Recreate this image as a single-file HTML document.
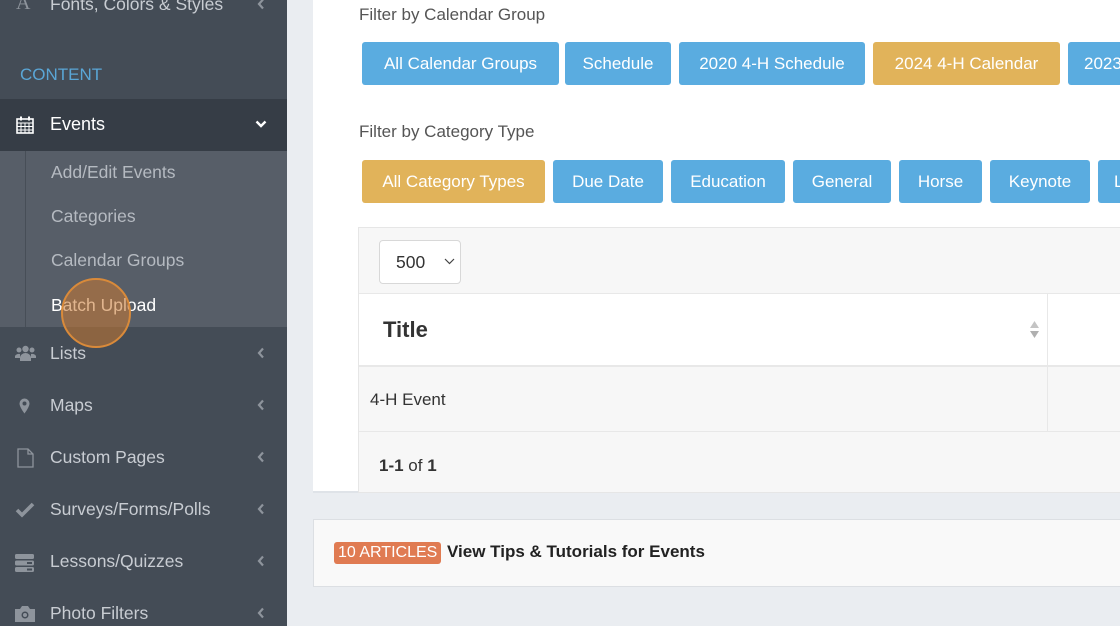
<!DOCTYPE html>
<html><head><meta charset="utf-8"><style>
*{margin:0;padding:0;box-sizing:border-box}
body{width:1120px;height:626px;overflow:hidden;background:#eaedf1;font-family:"Liberation Sans",sans-serif;position:relative}
.sb{position:absolute;left:0;top:0;width:287px;height:626px;background:#444c56}
.t{position:absolute;white-space:nowrap}
.item{position:absolute;left:0;width:287px;color:#c8ccd2;font-size:17.5px}
.item .lbl{position:absolute;left:50px}
.chev{position:absolute;left:257px}
.btn{position:absolute;height:43px;border-radius:3px;color:#fff;font-size:17px;line-height:43px;text-align:center;background:#5aace0;white-space:nowrap;overflow:hidden}
.gold{background:#e1b35a}
</style></head><body>
<div class="sb">
  <div class="t" style="left:16px;top:-8px;color:#8e949c;font-family:'Liberation Serif',serif;font-size:20px">A</div>
  <div class="t" style="left:50px;top:-6px;color:#c8ccd2;font-size:17.5px">Fonts, Colors &amp; Styles</div>
  <svg class="chev" style="top:-2px" width="8" height="12" viewBox="0 0 8 12"><path d="M6 1.5L2 6l4 4.5" stroke="#8e949c" stroke-width="2.2" fill="none"/></svg>
  <div class="t" style="left:20px;top:65px;color:#5aa6d6;font-size:17px">CONTENT</div>
  <div style="position:absolute;left:0;top:99px;width:287px;height:52px;background:#363d46"></div>
  <svg style="position:absolute;left:16px;top:116px" width="18" height="18" viewBox="0 0 18 18"><rect x="1" y="3" width="16" height="14" fill="none" stroke="#fff" stroke-width="1.6"/><path d="M1 7h16M5 7v10M9 7v10M13 7v10M1 10.5h16M1 14h16" stroke="#fff" stroke-width="1"/><rect x="4" y="0.5" width="2" height="4" fill="#fff"/><rect x="12" y="0.5" width="2" height="4" fill="#fff"/></svg>
  <div class="t" style="left:50px;top:114px;color:#fff;font-size:18px">Events</div>
  <svg style="position:absolute;left:255px;top:119px" width="12" height="10" viewBox="0 0 12 10"><path d="M1.5 2.5L6 7l4.5-4.5" stroke="#fff" stroke-width="2.4" fill="none"/></svg>
  <div style="position:absolute;left:0;top:151px;width:287px;height:176px;background:#575e68"></div>
  <div style="position:absolute;left:25px;top:151px;width:1px;height:176px;background:#474e57"></div>
  <div class="t" style="left:51px;top:162px;color:#b5bac1;font-size:17.5px">Add/Edit Events</div>
  <div class="t" style="left:51px;top:206px;color:#b5bac1;font-size:17.5px">Categories</div>
  <div class="t" style="left:51px;top:250px;color:#b5bac1;font-size:17.5px">Calendar Groups</div>
  <div class="t" style="left:51px;top:295px;color:#fff;font-size:17.5px">Batch Upload</div>
  <div style="position:absolute;left:61px;top:278px;width:70px;height:70px;border-radius:50%;background:rgba(200,120,50,0.55);border:2px solid #d98a3a"></div>
  <div class="item" style="top:343px"><span class="lbl">Lists</span></div>
  <svg class="chev" style="top:347px" width="8" height="12" viewBox="0 0 8 12"><path d="M6 1.5L2 6l4 4.5" stroke="#8e949c" stroke-width="2.2" fill="none"/></svg>
  <svg style="position:absolute;left:15px;top:345px" width="21" height="17" viewBox="0 0 21 17"><circle cx="10.5" cy="4" r="3.2" fill="#8e949c"/><circle cx="4" cy="5" r="2.5" fill="#8e949c"/><circle cx="17" cy="5" r="2.5" fill="#8e949c"/><path d="M5 16v-3a5.5 5 0 0 1 11 0v3z M0 13v-2a4 3 0 0 1 5-2v4z M21 13v-2a4 3 0 0 0-5-2v4z" fill="#8e949c"/></svg>
  <div class="item" style="top:395px"><span class="lbl">Maps</span></div>
  <svg class="chev" style="top:399px" width="8" height="12" viewBox="0 0 8 12"><path d="M6 1.5L2 6l4 4.5" stroke="#8e949c" stroke-width="2.2" fill="none"/></svg>
  <svg style="position:absolute;left:19px;top:398px" width="11" height="16" viewBox="0 0 11 16"><path d="M5.5 0.5a5 5 0 0 1 5 5c0 3.5-5 10-5 10s-5-6.5-5-10a5 5 0 0 1 5-5z" fill="#8e949c"/><circle cx="5.5" cy="5.5" r="2" fill="#444c56"/></svg>
  <div class="item" style="top:447px"><span class="lbl">Custom Pages</span></div>
  <svg class="chev" style="top:451px" width="8" height="12" viewBox="0 0 8 12"><path d="M6 1.5L2 6l4 4.5" stroke="#8e949c" stroke-width="2.2" fill="none"/></svg>
  <svg style="position:absolute;left:17px;top:448px" width="17" height="20" viewBox="0 0 17 20"><path d="M1 1h10l5 5v13H1z M11 1v5h5" fill="none" stroke="#8e949c" stroke-width="1.3"/></svg>
  <div class="item" style="top:499px"><span class="lbl">Surveys/Forms/Polls</span></div>
  <svg class="chev" style="top:503px" width="8" height="12" viewBox="0 0 8 12"><path d="M6 1.5L2 6l4 4.5" stroke="#8e949c" stroke-width="2.2" fill="none"/></svg>
  <svg style="position:absolute;left:15px;top:502px" width="20" height="16" viewBox="0 0 20 16"><path d="M2 8l5 5L18 2" stroke="#8e949c" stroke-width="3.6" fill="none"/></svg>
  <div class="item" style="top:551px"><span class="lbl">Lessons/Quizzes</span></div>
  <svg class="chev" style="top:555px" width="8" height="12" viewBox="0 0 8 12"><path d="M6 1.5L2 6l4 4.5" stroke="#8e949c" stroke-width="2.2" fill="none"/></svg>
  <svg style="position:absolute;left:15px;top:554px" width="19" height="18" viewBox="0 0 19 18"><rect x="0" y="0" width="19" height="5" rx="1.5" fill="#8e949c"/><rect x="0" y="6.5" width="19" height="5" rx="1.5" fill="#8e949c"/><rect x="0" y="13" width="19" height="5" rx="1.5" fill="#8e949c"/><rect x="12" y="8" width="5" height="2" fill="#444c56"/><rect x="12" y="14.5" width="5" height="2" fill="#444c56"/></svg>
  <div class="item" style="top:603px"><span class="lbl">Photo Filters</span></div>
  <svg class="chev" style="top:607px" width="8" height="12" viewBox="0 0 8 12"><path d="M6 1.5L2 6l4 4.5" stroke="#8e949c" stroke-width="2.2" fill="none"/></svg>
  <svg style="position:absolute;left:15px;top:605px" width="20" height="17" viewBox="0 0 20 17"><path d="M0 4h5l2-3h6l2 3h5v13H0z" fill="#8e949c"/><circle cx="10" cy="10" r="3.5" fill="#444c56"/><circle cx="10" cy="10" r="2" fill="#8e949c"/></svg>
</div>

<div style="position:absolute;left:313px;top:0;width:807px;height:493px;background:#fff;border-bottom:2px solid #dfe3e8"></div>
<div class="t" style="left:359px;top:5px;color:#555;font-size:17px">Filter by Calendar Group</div>
<div class="btn" style="left:362px;top:42px;width:197px">All Calendar Groups</div>
<div class="btn" style="left:565px;top:42px;width:106px">Schedule</div>
<div class="btn" style="left:679px;top:42px;width:186px">2020 4-H Schedule</div>
<div class="btn gold" style="left:873px;top:42px;width:187px">2024 4-H Calendar</div>
<div class="btn" style="left:1068px;top:42px;width:80px;text-align:left;padding-left:16px">2023</div>
<div class="t" style="left:359px;top:122px;color:#555;font-size:17px">Filter by Category Type</div>
<div class="btn gold" style="left:362px;top:160px;width:183px">All Category Types</div>
<div class="btn" style="left:553px;top:160px;width:110px">Due Date</div>
<div class="btn" style="left:671px;top:160px;width:114px">Education</div>
<div class="btn" style="left:793px;top:160px;width:98px">General</div>
<div class="btn" style="left:899px;top:160px;width:83px">Horse</div>
<div class="btn" style="left:990px;top:160px;width:100px">Keynote</div>
<div class="btn" style="left:1098px;top:160px;width:40px;text-align:left;padding-left:16px">L</div>

<div style="position:absolute;left:358px;top:227px;width:762px;height:266px;background:#f7f7f7;border:1px solid #e6e6e6;border-right:none"></div>
<div style="position:absolute;left:379px;top:240px;width:82px;height:44px;background:#fff;border:1px solid #d8d8d8;border-radius:4px"></div>
<div class="t" style="left:396px;top:252px;color:#333;font-size:17.5px">500</div>
<svg style="position:absolute;left:444px;top:258px" width="11" height="7" viewBox="0 0 11 7"><path d="M1 1l4.5 4.5L10 1" stroke="#444" stroke-width="1.2" fill="none"/></svg>
<div style="position:absolute;left:359px;top:293px;width:761px;height:74px;background:#fff;border-top:1px solid #e8e8e8;border-bottom:2px solid #e8e8e8"></div>
<div style="position:absolute;left:1047px;top:293px;width:1px;height:138px;background:#e8e8e8"></div>
<div class="t" style="left:383px;top:317px;color:#333;font-size:22px;font-weight:bold">Title</div>
<svg style="position:absolute;left:1029px;top:320px" width="11" height="19" viewBox="0 0 11 19"><path d="M5.5 1L10 8H1z" fill="#c4c4c4"/><path d="M5.5 18L10 11H1z" fill="#b0b0b0"/></svg>
<div style="position:absolute;left:359px;top:431px;width:761px;height:1px;background:#e8e8e8"></div>
<div class="t" style="left:370px;top:390px;color:#333;font-size:17px">4-H Event</div>
<div class="t" style="left:379px;top:456px;color:#333;font-size:17px"><b>1-1</b> of <b>1</b></div>

<div style="position:absolute;left:313px;top:519px;width:807px;height:68px;background:#f9f9f9;border:1px solid #dcdfe3;border-right:none"></div>
<div class="t" style="left:334px;top:542px;height:22px;padding:0 4px;background:#e07b52;color:#fff;border-radius:3px;font-size:16px;line-height:22px">10 ARTICLES</div>
<div class="t" style="left:447px;top:542px;color:#222;font-size:17px;font-weight:bold">View Tips &amp; Tutorials for Events</div>
</body></html>
